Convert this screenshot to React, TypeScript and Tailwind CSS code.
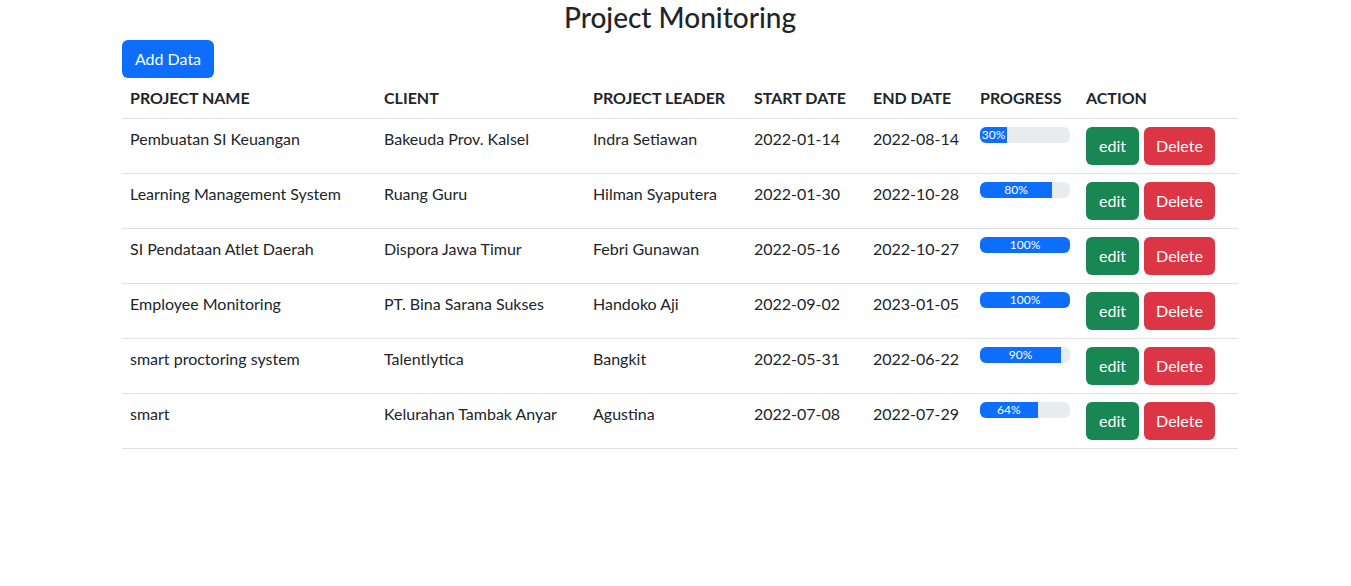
const projects = [
  { name: "Pembuatan SI Keuangan", client: "Bakeuda Prov. Kalsel", leader: "Indra Setiawan", start: "2022-01-14", end: "2022-08-14", progress: 30 },
  { name: "Learning Management System", client: "Ruang Guru", leader: "Hilman Syaputera", start: "2022-01-30", end: "2022-10-28", progress: 80 },
  { name: "SI Pendataan Atlet Daerah", client: "Dispora Jawa Timur", leader: "Febri Gunawan", start: "2022-05-16", end: "2022-10-27", progress: 100 },
  { name: "Employee Monitoring", client: "PT. Bina Sarana Sukses", leader: "Handoko Aji", start: "2022-09-02", end: "2023-01-05", progress: 100 },
  { name: "smart proctoring system", client: "Talentlytica", leader: "Bangkit", start: "2022-05-31", end: "2022-06-22", progress: 90 },
  { name: "smart", client: "Kelurahan Tambak Anyar", leader: "Agustina", start: "2022-07-08", end: "2022-07-29", progress: 64 },
]

const columns = [
  { label: "PROJECT NAME", w: "w-[254px]" },
  { label: "CLIENT", w: "w-[209px]" },
  { label: "PROJECT LEADER", w: "w-[161px]" },
  { label: "START DATE", w: "w-[119px]" },
  { label: "END DATE", w: "w-[107px]" },
  { label: "PROGRESS", w: "w-[106px]" },
  { label: "ACTION", w: "w-[160px]" },
]

export default function App() {
  return (
    <div className="min-h-screen bg-white text-[#212529] font-['Lato','Liberation_Sans',sans-serif] text-base leading-6">
      <div className="w-[1116px] ml-[122px]">
        <h3 className="text-center text-[28px] leading-[34px] font-medium mb-1.5">Project Monitoring</h3>
        <button className="bg-[#0d6efd] text-white rounded-md px-3 h-[38px] w-[92px] leading-6">Add Data</button>

        <table className="w-full table-fixed border-collapse">
          <thead>
            <tr className="border-b border-[#dee2e6]">
              {columns.map((c) => (
                <th key={c.label} className={`${c.w} text-left font-bold p-2 whitespace-nowrap`}>
                  {c.label}
                </th>
              ))}
            </tr>
          </thead>
          <tbody>
            {projects.map((p) => (
              <tr key={p.name} className="border-b border-[#dee2e6]">
                <td className="p-2 align-top">{p.name}</td>
                <td className="p-2 align-top">{p.client}</td>
                <td className="p-2 align-top">{p.leader}</td>
                <td className="p-2 align-top">{p.start}</td>
                <td className="p-2 align-top">{p.end}</td>
                <td className="p-2 align-top">
                  <div className="flex h-4 w-[90px] overflow-hidden rounded-md bg-[#e9ecef]">
                    <div
                      className="flex items-center justify-center bg-[#0d6efd] text-white text-xs leading-4"
                      style={{ width: `${p.progress}%` }}
                    >
                      {p.progress}%
                    </div>
                  </div>
                </td>
                <td className="p-2 align-top">
                  <div className="flex gap-[5px]">
                    <button className="w-[53px] h-[38px] rounded-md bg-[#198754] text-white">edit</button>
                    <button className="w-[71px] h-[38px] rounded-md bg-[#dc3545] text-white">Delete</button>
                  </div>
                </td>
              </tr>
            ))}
          </tbody>
        </table>
      </div>
    </div>
  )
}
